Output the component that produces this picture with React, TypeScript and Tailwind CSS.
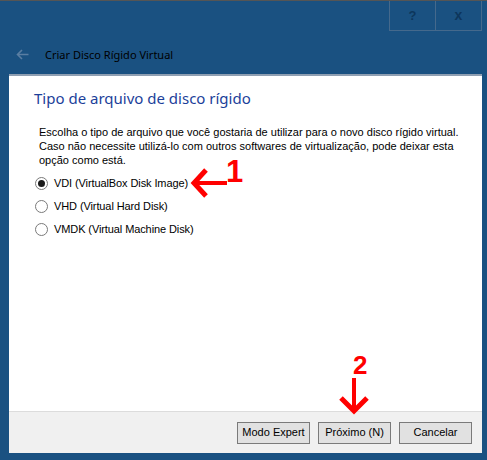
import React from 'react';

const ui = { fontFamily: '"Liberation Sans", Arial, sans-serif' };

function Radio({ checked, label }: { checked?: boolean; label: string }) {
  return (
    <div className="flex h-[23px] items-center">
      <span className="ml-[26px] flex h-[13px] w-[13px] items-center justify-center rounded-full border border-[#7a7a7a] bg-white">
        {checked && <span className="h-[7px] w-[7px] rounded-full bg-[#1a1a1a]" />}
      </span>
      <span className="ml-[6px] text-[11px] tracking-[-0.1px] text-black">{label}</span>
    </div>
  );
}

function Btn({ children }: { children: React.ReactNode }) {
  return (
    <button className="flex h-[22px] w-[73px] items-center justify-center border border-[#7a7a7a] bg-[#e1e1e1] text-[11px] text-black">
      {children}
    </button>
  );
}

export default function App() {
  return (
    <div className="relative flex h-[460px] w-[487px] flex-col overflow-hidden border-t border-[#555] bg-[#1a5181]" style={ui}>
      {/* caption buttons */}
      <div className="flex h-[30px] justify-end pr-[5px]">
        <div className="flex h-[30px] w-[47px] items-center justify-center border-b border-r border-l border-[#45698c] text-[13px] font-bold text-[#0d365c]">
          ?
        </div>
        <div className="flex h-[30px] w-[46px] items-center justify-center border-b border-r border-[#45698c] text-[14px] font-bold text-[#0d365c]">
          x
        </div>
      </div>

      {/* header */}
      <div className="flex h-[43px] items-center pl-[16px] pt-[5px]">
        <svg width="13" height="11" viewBox="0 0 13 11" className="mt-[-2px]">
          <path d="M6 1 L1.5 5.5 L6 10 M1.5 5.5 H12.5" stroke="#5a7ea2" strokeWidth="1.6" fill="none" />
        </svg>
        <span className="ml-[16px] text-[11px] text-black" style={{ fontFamily: '"Noto Sans", "Open Sans", sans-serif' }}>
          Criar Disco Rígido Virtual
        </span>
      </div>

      {/* page */}
      <div className="mx-[9px] mr-[5px] flex flex-1 flex-col border-t-2 border-[#8f9fb2] bg-white">
        <div className="flex-1">
          <div
            className="ml-[25px] mt-[11px] text-[15px] text-[#1c3f9a]"
            style={{ fontFamily: '"Noto Sans", "Open Sans", sans-serif' }}
          >
            Tipo de arquivo de disco rígido
          </div>
          <div className="ml-[30px] mt-[15px] text-[11px] leading-[14px] text-black">
            Escolha o tipo de arquivo que você gostaria de utilizar para o novo disco rígido virtual.
            <br />
            Caso não necessite utilizá-lo com outros softwares de virtualização, pode deixar esta
            <br />
            opção como está.
          </div>
          <div className="mt-[5px]">
            <Radio checked label="VDI (VirtualBox Disk Image)" />
            <Radio label="VHD (Virtual Hard Disk)" />
            <Radio label="VMDK (Virtual Machine Disk)" />
          </div>
        </div>
        <div className="flex h-[42px] items-center justify-end gap-[8px] border-t border-[#dcdcdc] bg-[#f0f0f0] pr-[10px]">
          <Btn>Modo Expert</Btn>
          <Btn>Próximo (N)</Btn>
          <Btn>Cancelar</Btn>
        </div>
      </div>
      <div className="h-[7px]" />

      {/* annotation 1 */}
      <svg className="absolute left-[190px] top-[166px]" width="40" height="32" viewBox="0 0 40 32">
        <path d="M4 16 H37" stroke="#ff0000" strokeWidth="4" />
        <path d="M16 3 L4 16 L16 29" stroke="#ff0000" strokeWidth="5" fill="none" />
      </svg>
      <span className="absolute left-[226px] top-[155px] text-[31px] font-bold leading-none text-[#ff0000]">1</span>

      {/* annotation 2 */}
      <svg className="absolute left-[337px] top-[376px]" width="34" height="38" viewBox="0 0 34 38">
        <path d="M17 1 V34" stroke="#ff0000" strokeWidth="4" />
        <path d="M4 21 L17 34 L30 21" stroke="#ff0000" strokeWidth="5" fill="none" />
      </svg>
      <span className="absolute left-[353px] top-[351px] text-[26px] font-bold leading-none text-[#ff0000]">2</span>
    </div>
  );
}
